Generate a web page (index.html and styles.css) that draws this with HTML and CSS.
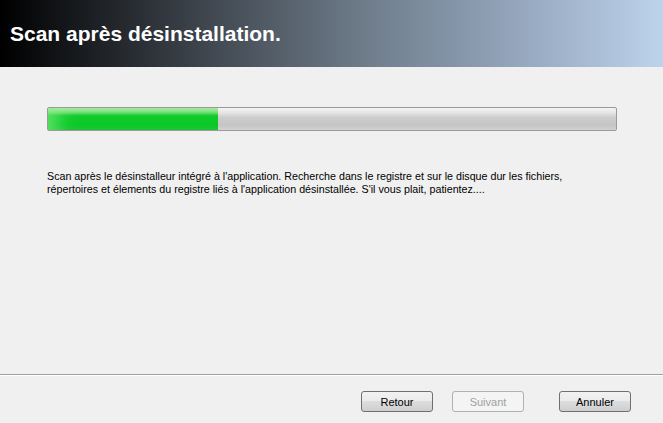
FILE: index.html
```html
<!DOCTYPE html>
<html>
<head>
<meta charset="utf-8">
<link rel="stylesheet" href="styles.css">
</head>
<body>
<div class="window">
  <div class="header"><h1 class="title">Scan après désinstallation.</h1></div>
  <div class="content">
    <div class="progress"><div class="fill" style="width:30%"></div></div>
    <p class="desc">Scan après le désinstalleur intégré à l'application. Recherche dans le registre et sur le disque dur les fichiers,<br>répertoires et élements du registre liés à l'application désinstallée. S'il vous plait, patientez....</p>
  </div>
  <div class="footer">
    <button class="btn">Retour</button>
    <button class="btn disabled">Suivant</button>
    <button class="btn cancel">Annuler</button>
  </div>
</div>
</body>
</html>
```
FILE: styles.css
```css
html, body { margin: 0; padding: 0; }
body { background: #f0f0f0; font-family: "Liberation Sans", Arial, sans-serif; }
.window { width: 663px; height: 423px; display: flex; flex-direction: column; }
.header {
  height: 67px; flex-shrink: 0;
  background: linear-gradient(to right, #000 0%, #24282d 18%, #4d5660 38%, #6e7c8a 55%, #8a9bb0 72%, #a7bad2 88%, #bdd3ec 100%);
  display: flex; align-items: center;
}
.title { margin: 0 0 0 10px; color: #fff; font-size: 21px; font-weight: bold; }
.content { flex: 1; padding: 40px 46px 0 47px; }
.progress {
  height: 22px; width: 568px;
  border: 1px solid #9a9a9a; border-radius: 2px;
  background: linear-gradient(to bottom, #f4f4f4 0%, #e6e6e6 20%, #cbcbcb 45%, #c6c6c6 80%, #d2d2d2 100%);
  overflow: hidden;
}
.fill {
  height: 100%;
  background: linear-gradient(to bottom, #a8eca8 0%, #7ee07e 18%, #12cc2c 35%, #08c826 80%, #18c030 100%);
  box-shadow: inset 20px 0 18px -10px rgba(140,240,140,0.6);
}
.desc { margin: 39px 0 0 0; font-size: 10.7px; line-height: 13px; color: #000; }
.footer {
  box-sizing: border-box; flex-shrink: 0;
  height: 49px; border-top: 1px solid #a0a0a0;
  box-shadow: inset 0 1px 0 #fff;
  display: flex; align-items: flex-start; padding: 16px 0 0 361px; gap: 19px;
}
.btn {
  width: 72px; height: 21px; padding: 0;
  font-family: "Liberation Sans", Arial, sans-serif; font-size: 11px; font-weight: normal; color: #000;
  border: 1px solid #707070; border-radius: 3px;
  background: linear-gradient(to bottom, #f2f2f2 0%, #ebebeb 45%, #dddddd 50%, #cfcfcf 100%);
}
.btn.disabled { color: #a0a0a0; border-color: #adb2b5; background: #f4f4f4; }
.btn.cancel { margin-left: 16px; }
```
